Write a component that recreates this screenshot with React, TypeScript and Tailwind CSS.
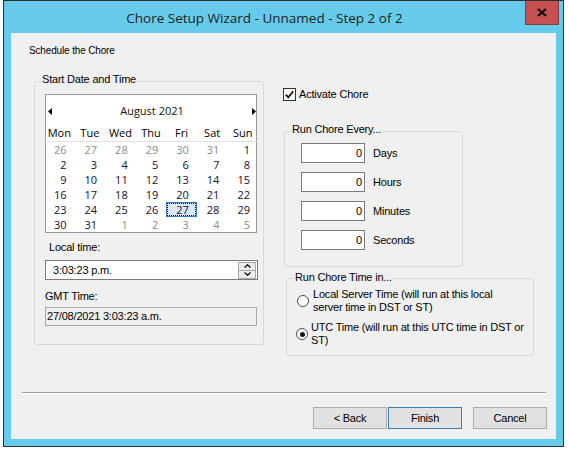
import React from "react";

const sans = "font-['Liberation_Sans',Arial,sans-serif]";
const seg = "font-['Open_Sans','Noto_Sans',sans-serif]";

type Day = { d: number; muted?: boolean };

const m = (d: number): Day => ({ d, muted: true });
const n = (d: number): Day => ({ d });

const weeks: Day[][] = [
  [m(26), m(27), m(28), m(29), m(30), m(31), n(1)],
  [n(2), n(3), n(4), n(5), n(6), n(7), n(8)],
  [n(9), n(10), n(11), n(12), n(13), n(14), n(15)],
  [n(16), n(17), n(18), n(19), n(20), n(21), n(22)],
  [n(23), n(24), n(25), n(26), n(27), n(28), n(29)],
  [n(30), n(31), m(1), m(2), m(3), m(4), m(5)],
];

const dayNames = ["Mon", "Tue", "Wed", "Thu", "Fri", "Sat", "Sun"];

function Calendar() {
  return (
    <div className={`ml-[10px] mt-[4px] w-[212px] h-[139px] border border-[#989898] bg-white ${seg} text-[11px] tracking-normal`}>
      <div className="mt-[6px] h-[20px] flex items-center pl-[2px]">
        <svg width="4" height="7" viewBox="0 0 4 7">
          <path d="M4 0 L0 3.5 L4 7 Z" fill="#000" />
        </svg>
        <div className="flex-1 text-center leading-[20px] text-[#111]">August 2021</div>
        <svg width="4" height="7" viewBox="0 0 4 7">
          <path d="M0 0 L4 3.5 L0 7 Z" fill="#000" />
        </svg>
      </div>
      <div className="ml-[-2px] w-[214px] mt-[4px] grid grid-cols-7 h-[17px] border-b border-[#e3e3e3]">
        {dayNames.map((d) => (
          <div key={d} className="text-center leading-[16px] text-black">
            {d}
          </div>
        ))}
      </div>
      <div className="ml-[-2px] w-[214px] grid grid-cols-7">
        {weeks.map((w, wi) =>
          w.map((day, di) => {
            const sel = wi === 4 && di === 4;
            if (sel) {
              return (
                <div key={`${wi}-${di}`} className="h-[15px] border border-[#3a78c8] bg-[#d9e8fb]">
                  <div className="h-full border border-dotted border-black text-right pr-[6px] leading-[11px] text-[#111133]">
                    {day.d}
                  </div>
                </div>
              );
            }
            return (
              <div
                key={`${wi}-${di}`}
                className={`h-[15px] text-right pr-[8px] leading-[15px] ${day.muted ? "text-[#8a8a8a]" : "text-[#111133]"}`}
              >
                {day.d}
              </div>
            );
          })
        )}
      </div>
    </div>
  );
}

function Spinner() {
  return (
    <div className="ml-auto mr-[1px] w-[18px] h-[17px] flex flex-col border border-[#a8a8a8] bg-[#ececec]">
      <div className="flex-1 flex items-center justify-center border-b border-[#a8a8a8]">
        <svg width="7" height="4" viewBox="0 0 7 4">
          <path d="M0.5 3.5 L3.5 0.8 L6.5 3.5" fill="none" stroke="#000" strokeWidth="1.2" />
        </svg>
      </div>
      <div className="flex-1 flex items-center justify-center">
        <svg width="7" height="4" viewBox="0 0 7 4">
          <path d="M0.5 0.5 L3.5 3.2 L6.5 0.5" fill="none" stroke="#000" strokeWidth="1.2" />
        </svg>
      </div>
    </div>
  );
}

function NumberRow({ label }: { label: string }) {
  return (
    <div className="flex items-center">
      <div className="w-[64px] h-[20px] border border-[#7a7a7a] bg-white text-right pr-[2px] leading-[18px]">0</div>
      <span className="ml-[8px] leading-[14px]">{label}</span>
    </div>
  );
}

function Radio({ checked }: { checked?: boolean }) {
  return (
    <div className="w-[12px] h-[12px] shrink-0 rounded-full border border-[#4d4d4d] bg-white flex items-center justify-center">
      {checked && <div className="w-[5px] h-[5px] rounded-full bg-[#111]" />}
    </div>
  );
}

export default function App() {
  return (
    <div className="w-[569px] h-[451px] bg-white">
      <div className="ml-[3px] w-[561px] h-[447px] border border-[#2d2d2d] bg-[#66cbea] flex flex-col">
        <div className="h-[32px] flex items-start">
          <div className={`flex-1 text-center pt-[7px] text-[13.5px] leading-[20px] text-[#1e1e1e] ${seg}`}>
            Chore Setup Wizard - Unnamed - Step 2 of 2
          </div>
          <div className="mr-[4px] w-[34px] h-[24px] bg-[#c75050] border-x border-b border-[#8e3a3a] flex items-center justify-center">
            <svg width="10" height="9" viewBox="0 0 10 9">
              <path d="M1 1 L9 8 M9 1 L1 8" stroke="#111" strokeWidth="2.3" />
            </svg>
          </div>
        </div>

        <div className={`mx-[7px] h-[406px] bg-[#f0f0f0] flex flex-col text-[11px] tracking-[-0.2px] text-black ${sans}`}>
          <div className="pt-[11px] pl-[18px] leading-[14px] text-[10px] tracking-[-0.15px]">Schedule the Chore</div>

          <div className="mt-[14px] flex items-start">
            <fieldset className="ml-[23px] w-[230px] h-[273px] border border-[#d8d8d8] rounded-[3px]">
              <legend className="ml-[6px] px-[1px] pb-[4px] leading-[14px]">Start Date and Time</legend>
              <Calendar />
              <div className="mt-[7px] ml-[14px] leading-[14px]">Local time:</div>
              <div className="mt-[6px] ml-[10px] w-[213px] h-[20px] border border-[#7a7a7a] bg-white flex items-center">
                <span className="pl-[7px] leading-[14px]">3:03:23 p.m.</span>
                <Spinner />
              </div>
              <div className="mt-[9px] ml-[10px] leading-[14px]">GMT Time:</div>
              <div className="mt-[4px] ml-[10px] w-[212px] h-[19px] border border-[#a8a8a8] bg-[#f0f0f0] pl-[1px] leading-[17px]">
                27/08/2021 3:03:23 a.m.
              </div>
            </fieldset>

            <div className="ml-[19px] mt-[15px] flex flex-col">
              <div className="h-[14px] flex items-center">
                <div className="w-[13px] h-[13px] border border-[#333] bg-white flex items-center justify-center">
                  <svg width="11" height="11" viewBox="0 0 11 11">
                    <path d="M1.8 5.6 L4.3 8.3 L9.3 2.2" fill="none" stroke="#111" strokeWidth="1.8" />
                  </svg>
                </div>
                <span className="ml-[3px] leading-[14px]">Activate Chore</span>
              </div>

              <fieldset className="mt-[21px] ml-[1px] w-[179px] h-[145px] border border-[#d8d8d8] rounded-[3px]">
                <legend className="ml-[6px] px-[1px] pb-[4px] leading-[14px]">Run Chore Every...</legend>
                <div className="mt-[3px] pl-[16px] flex flex-col gap-[9px]">
                  <NumberRow label="Days" />
                  <NumberRow label="Hours" />
                  <NumberRow label="Minutes" />
                  <NumberRow label="Seconds" />
                </div>
              </fieldset>

              <fieldset className="mt-[3px] ml-[3px] w-[248px] h-[86px] border border-[#d8d8d8] rounded-[3px]">
                <legend className="ml-[7px] px-[1px] pb-[2px] leading-[14px]">Run Chore Time in...</legend>
                <div className="mt-[2px] flex items-center">
                  <div className="ml-[10px]">
                    <Radio />
                  </div>
                  <div className="ml-[4px] leading-[13px]">
                    Local Server Time (will run at this local
                    <br />
                    server time in DST or ST)
                  </div>
                </div>
                <div className="mt-[7px] flex items-center">
                  <div className="ml-[9px]">
                    <Radio checked />
                  </div>
                  <div className="ml-[3px] leading-[13px]">
                    UTC Time (will run at this UTC time in DST or
                    <br />
                    ST)
                  </div>
                </div>
              </fieldset>
            </div>
          </div>

          <div className="mt-[36px] ml-[11px] w-[524px] h-[2px] border-t border-[#a0a0a0] border-b border-b-white" />

          <div className="mt-[13px] ml-[302px] flex">
            <button className="w-[74px] h-[22px] border border-[#adadad] bg-[#e1e1e1] leading-[20px]">&lt; Back</button>
            <button className="ml-[1px] w-[74px] h-[22px] border border-[#3c7fb1] bg-[#e1e1e1] leading-[20px]">Finish</button>
            <button className="ml-[11px] w-[74px] h-[22px] border border-[#adadad] bg-[#e1e1e1] leading-[20px]">Cancel</button>
          </div>
        </div>
      </div>
    </div>
  );
}
